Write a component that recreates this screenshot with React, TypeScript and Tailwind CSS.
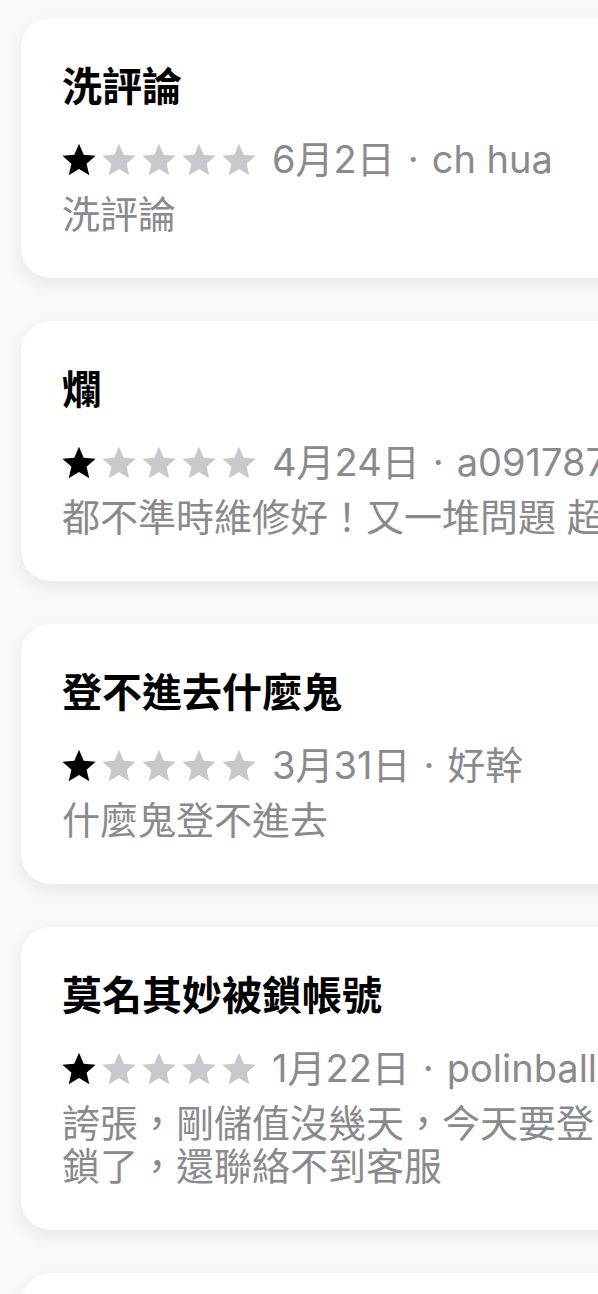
import React from "react";

type Review = { title: string; date: string; author: string; body: string[] };

const reviews: Review[] = [
  { title: "洗評論", date: "6月2日", author: "ch hua", body: ["洗評論"] },
  { title: "爛", date: "4月24日", author: "a0917873", body: ["都不準時維修好！又一堆問題 超爛"] },
  { title: "登不進去什麼鬼", date: "3月31日", author: "好幹", body: ["什麼鬼登不進去"] },
  {
    title: "莫名其妙被鎖帳號",
    date: "1月22日",
    author: "polinball",
    body: ["誇張，剛儲值沒幾天，今天要登", "鎖了，還聯絡不到客服"],
  },
  { title: "不推", date: "1月3日", author: "user", body: ["不推"] },
];

function Star({ filled }: { filled: boolean }) {
  return (
    <svg viewBox="1 1.2 22 21.2" className="h-[33px] w-[34px]" aria-hidden>
      <path
        d="M12 1.6l3.05 7.1 7.7.7-5.84 5.07 1.75 7.53L12 18.02 5.34 22l1.75-7.53L1.25 9.4l7.7-.7z"
        fill={filled ? "#000000" : "#c7c7cc"}
      />
    </svg>
  );
}

function Card({ r }: { r: Review }) {
  return (
    <div className="rounded-[30px] bg-white pl-[41px] pt-[45px] pb-[42px] shadow-[0_6px_18px_rgba(0,0,0,0.08)]">
      <div className="text-[40px] leading-[48px] font-bold text-black whitespace-nowrap">{r.title}</div>
      <div className="mt-[27px] flex h-[43px] items-center whitespace-nowrap">
        <div className="flex items-center gap-[6px]">
          <Star filled />
          <Star filled={false} />
          <Star filled={false} />
          <Star filled={false} />
          <Star filled={false} />
        </div>
        <span className="ml-[16px] text-[38px] leading-[43px] text-[#8a8a8e]">
          {r.date}
          <span className="mx-[13px]">·</span>
          {r.author}
        </span>
      </div>
      <div className="mt-[12px] text-[38px] leading-[43px] text-[#8a8a8e]">
        {r.body.map((line, i) => (
          <div key={i} className="whitespace-nowrap">
            {line}
          </div>
        ))}
      </div>
    </div>
  );
}

export default function App() {
  return (
    <div className="h-[1294px] w-full overflow-hidden bg-[#f9f9fb] pl-[21px] pt-[18px] font-['Inter','Noto_Sans_CJK_TC',sans-serif]">
      <div className="flex w-[700px] flex-col gap-[43px]">
        {reviews.map((r, i) => (
          <Card key={i} r={r} />
        ))}
      </div>
    </div>
  );
}
